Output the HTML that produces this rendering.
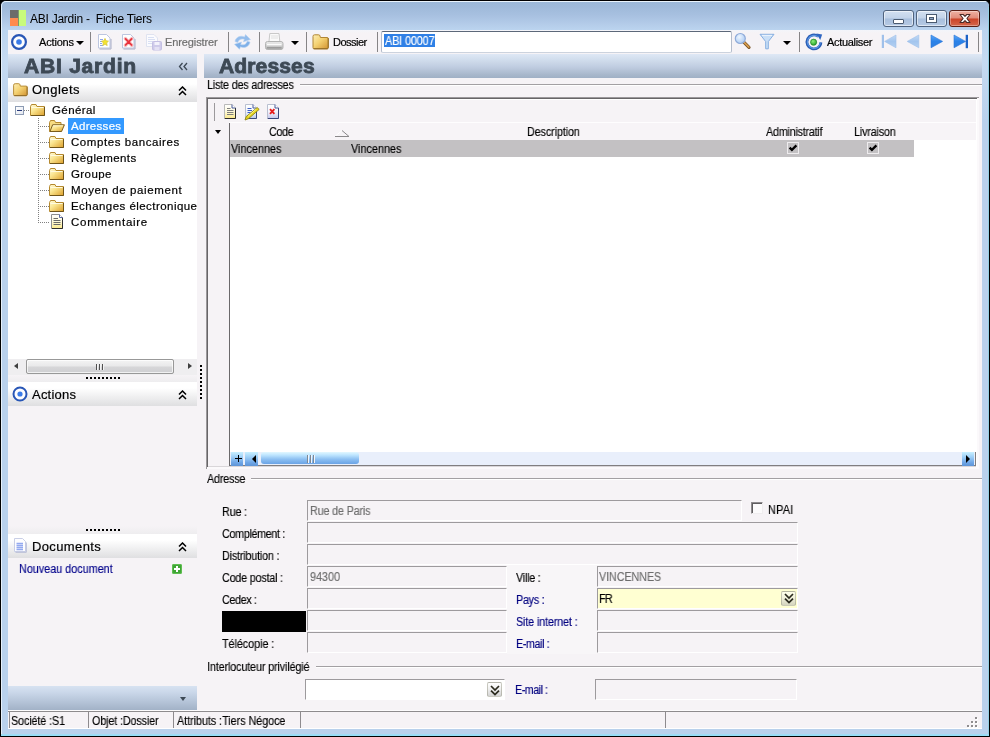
<!DOCTYPE html>
<html>
<head>
<meta charset="utf-8">
<title>ABI Jardin - Fiche Tiers</title>
<style>
html,body{margin:0;padding:0;}
body{width:990px;height:737px;overflow:hidden;background:#000;font-family:"Liberation Sans",sans-serif;font-size:11px;color:#000;position:relative;}
.a{position:absolute;}
.t{will-change:transform;position:absolute;white-space:nowrap;line-height:14px;height:14px;}
#frame{left:0;top:0;width:988px;height:735px;border:1px solid #000;border-radius:6px 6px 0 0;background:#b9d1ec;overflow:hidden;}
#frame .hl{left:0;top:0;width:987px;height:734px;border-left:1px solid #e6f0fa;border-top:1px solid #eaf4fc;border-radius:5px 0 0 0;}
#titlegrad{left:0;top:0;width:988px;height:120px;background:linear-gradient(#9cb8d8 0,#9fbada 6px,#a7c0e0 14px,#b5cdea 24px,#bbd4ef 29px,#c6daf1 60px,#b9d1ec 120px);}
#client{left:8px;top:30px;width:974px;height:699px;background:#f6f3f6;overflow:hidden;}
.field{position:absolute;height:19px;border:1px solid;border-color:#9d9a9d #fff #fff #9d9a9d;background:#f6f3f6;}
.lbl{-webkit-text-stroke:0.15px;will-change:transform;position:absolute;white-space:nowrap;line-height:14px;height:14px;font-size:12px;transform:scaleX(.9);transform-origin:0 0;}
.gbtn{background:linear-gradient(#c9f0ff 0,#9fd0f7 35%,#6fa6e6 75%,#5e93d6 100%);}
.navy{color:#000080;}
.gray{color:#6d6d6d;}

.wb{height:15px;border:1px solid #50637e;border-radius:3px;background:linear-gradient(#d3e0f1 0,#c2d3e9 48%,#a8bfdd 52%,#b6cae4 100%);box-shadow:inset 0 0 0 1px rgba(255,255,255,.55);}
.wc{border-color:#5a1e14;background:linear-gradient(#eeb1a3 0,#e18b79 48%,#cb4328 52%,#d5674c 100%);box-shadow:inset 0 0 0 1px rgba(255,255,255,.35);}
.tri{width:0;height:0;border-style:solid;border-color:#000 transparent transparent transparent;}
.sep{width:1px;height:20px;background:#868486;margin-top:-1px;}
.tb{font-size:11px;-webkit-text-stroke:0.2px;}
.gray2{color:#6e6e6e;}

.hdr{height:24px;top:54px;background:linear-gradient(#dfe8f5 0,#d3dfee 20%,#bfcce0 55%,#a9b8cc 85%,#a0b0c5 100%);}
.big{will-change:transform;position:absolute;white-space:nowrap;font-weight:bold;font-size:19.5px;line-height:24px;height:24px;color:#3d4955;transform-origin:0 0;-webkit-text-stroke:0.8px #3d4955;}
.sech{left:8px;width:189px;height:24px;background:linear-gradient(#ffffff 0,#ffffff 25%,#f0f0f1 60%,#dfdfe1 100%);}
.v13{-webkit-text-stroke:0.2px;font-size:13px;line-height:16px;height:16px;}
.v11{-webkit-text-stroke:0.2px;font-size:11.5px;line-height:14px;height:14px;}
.hd{position:absolute;height:1px;background-image:linear-gradient(90deg,#808080 50%,transparent 50%);background-size:2px 1px;}
.vd{position:absolute;width:1px;background-image:linear-gradient(#808080 50%,transparent 50%);background-size:1px 2px;}
.dots{z-index:2;position:absolute;height:2px;width:34px;background-image:linear-gradient(90deg,#000 50%,transparent 50%);background-size:4px 2px;}

.sb{background:#efeef0;}
.thumb{border:1px solid #989898;border-radius:2px;background:linear-gradient(#f4f4f4 0,#e9e9ea 45%,#d6d6d8 55%,#cfcfd2 100%);box-shadow:inset 0 0 0 1px rgba(255,255,255,.7);}
.grip{position:absolute;width:1px;height:6px;background:#505050;border-right:1px solid #f4f4f4;}

.gl{position:absolute;height:1px;background:#a3a0a3;border-bottom:1px solid #fff;}
.cb{position:absolute;width:10px;height:10px;border:1px solid;border-color:#8e8b8e #efedef #efedef #8e8b8e;background:#fcfbfc;box-shadow:inset 1px 1px 0 #5f5d5f;}
.ddb{position:absolute;width:15px;height:15px;box-sizing:border-box;border:1px solid rgba(140,140,120,.45);border-radius:2px;background:linear-gradient(rgba(255,255,255,.55) 0,rgba(225,225,225,.5) 45%,rgba(170,170,170,.5) 100%);}
</style>
</head>
<body>
<div id="frame" class="a">
  <div id="titlegrad" class="a"></div>
  <div class="a hl"></div>
  <div class="a" style="left:987px;top:6px;width:1px;height:729px;background:#93cfe3;"></div>
  <div class="a" style="left:0;top:733px;width:988px;height:2px;background:linear-gradient(#a5daf3,#8ee0fa);"></div>
</div>
<!-- app icon -->
<div class="a" style="left:10px;top:10px;width:8px;height:8px;background:#6c6c6a;"></div>
<div class="a" style="left:10px;top:18px;width:8px;height:8px;background:#ff8b4f;"></div>
<div class="a" style="left:18px;top:10px;width:8px;height:16px;background:#c8fb7c;"></div>
<div class="a" style="left:18px;top:10px;width:1px;height:16px;background:#7d9a6a;"></div>
<div class="t" id="title" style="left:30px;top:12px;font-size:12px;letter-spacing:-0.25px;">ABI Jardin -&nbsp; Fiche Tiers</div>

<div id="client" class="a">
</div>

<!-- window buttons -->
<div class="a wb" style="left:883px;top:10px;width:29px;"><div class="a" style="left:9px;top:8px;width:9px;height:3px;background:#fff;border:1px solid #4a5a70;border-radius:1px;"></div></div>
<div class="a wb" style="left:916px;top:10px;width:29px;"><div class="a" style="left:10px;top:4px;width:5px;height:3px;border:2px solid #fff;outline:1px solid #4a5a70;background:#8ea4c2;"></div><div class="a" style="left:12px;top:6px;width:5px;height:3px;border:1px solid #4a5a70;box-sizing:border-box;"></div></div>
<div class="a wb wc" style="left:949px;top:10px;width:29px;">
<svg class="a" style="left:9px;top:2px" width="12" height="11" viewBox="0 0 12 11"><path d="M1 1.5 L4.2 1.5 L6 3.3 L7.8 1.5 L11 1.5 L7.9 5.5 L11 9.5 L7.8 9.5 L6 7.7 L4.2 9.5 L1 9.5 L4.1 5.5 Z" fill="#fff" stroke="#4a2a26" stroke-width="1.1" stroke-linejoin="round"/></svg>
</div>

<!-- toolbar -->
<div class="a" id="toolbar" style="left:8px;top:30px;width:974px;height:24px;background:linear-gradient(#f3f5fa 0,#f6f3f6 3px);"></div>
<!-- actions icon -->
<svg class="a" style="left:9.9px;top:32.8px" width="18" height="18" viewBox="0 0 18 18"><circle cx="9" cy="9" r="6.9" fill="#fdfdff" stroke="#2856b6" stroke-width="2.2"/><circle cx="9" cy="9" r="2.8" fill="#3a7be8"/></svg>
<div class="t tb" id="tbActions" style="left:39px;top:35px;letter-spacing:-0.17px;">Actions</div>
<div class="a tri" style="left:76px;top:41px;border-width:4px 4px 0 4px;"></div>
<div class="a sep" style="left:90px;top:33px;"></div>
<div class="t tb gray2" id="tbEnr" style="left:165px;top:35px;letter-spacing:-0.11px;">Enregistrer</div>
<div class="a sep" style="left:228px;top:33px;"></div>
<div class="a sep" style="left:259px;top:33px;"></div>
<div class="a tri" style="left:291px;top:41px;border-width:4px 4px 0 4px;"></div>
<div class="a sep" style="left:306px;top:33px;"></div>
<div class="t tb" id="tbDossier" style="left:333px;top:35px;letter-spacing:-0.51px;">Dossier</div>
<div class="a sep" style="left:377px;top:33px;"></div>
<div class="a" style="left:381px;top:31px;width:349px;height:20px;border:1px solid #b4bccb;border-top-color:#5c6879;border-bottom-color:#ccd3de;background:#fff;border-radius:2px;"></div>
<div class="a" style="left:384px;top:34px;width:51px;height:13px;background:#2f80e6;"></div>
<div class="lbl" id="tbAbi" style="left:385px;top:34px;color:#fff;letter-spacing:-0.12px;">ABI 00007</div>
<div class="a tri" style="left:783px;top:41px;border-width:4px 4px 0 4px;"></div>
<div class="a sep" style="left:799px;top:33px;"></div>
<div class="t tb" id="tbActu" style="left:827px;top:35px;letter-spacing:-0.32px;">Actualiser</div>
<div class="a sep" style="left:978px;top:33px;"></div>

<!-- header band -->
<div class="a hdr" style="left:8px;width:189px;"></div>
<div class="a hdr" style="left:204px;width:778px;"></div>
<div class="big" id="hAbi" style="left:24px;top:54px;transform:scaleX(1.08);letter-spacing:0.7px;">ABI Jardin</div>
<div class="big" id="hAdr" style="left:219px;top:54px;transform:scaleX(1.08);letter-spacing:0.1px;">Adresses</div>
<svg class="a" style="left:178px;top:62px" width="10" height="9" viewBox="0 0 10 9"><path d="M4.5 1 L1.5 4.5 L4.5 8 M9 1 L6 4.5 L9 8" fill="none" stroke="#3d4955" stroke-width="1.3"/></svg>

<!-- left panel -->
<div class="a" style="left:8px;top:78px;width:189px;height:281px;background:#fff;"></div>
<div class="a sech" style="top:78px;"></div>
<svg class="a chev" style="left:178px;top:86px" width="9" height="10" viewBox="0 0 9 10"><path d="M1 4.5 L4.5 1 L8 4.5 M1 9 L4.5 5.5 L8 9" fill="none" stroke="#000" stroke-width="1.5"/></svg>
<div class="t v13" id="lOnglets" style="left:32px;top:82px;letter-spacing:0.47px;">Onglets</div>

<!-- tree -->
<div class="a" style="left:15px;top:106px;width:7px;height:7px;border:1px solid #8c9bb3;background:linear-gradient(135deg,#fff,#e4e8f0);"></div>
<div class="a" style="left:17px;top:110px;width:5px;height:1px;background:#26397a;"></div>
<div class="hd" style="left:24px;top:110px;width:6px;"></div>
<div class="vd" style="left:38px;top:118px;height:105px;"></div>
<div class="hd" style="left:40px;top:126px;width:9px;"></div>
<div class="hd" style="left:40px;top:142px;width:9px;"></div>
<div class="hd" style="left:40px;top:158px;width:9px;"></div>
<div class="hd" style="left:40px;top:174px;width:9px;"></div>
<div class="hd" style="left:40px;top:190px;width:9px;"></div>
<div class="hd" style="left:40px;top:206px;width:9px;"></div>
<div class="hd" style="left:40px;top:222px;width:9px;"></div>
<div class="a" style="left:68px;top:118px;width:56px;height:16px;background:#3399ff;"></div>
<div class="a" id="treeclip" style="left:8px;top:101px;width:189px;height:140px;overflow:hidden;">
<div class="t v11" id="t0" style="left:44px;top:2px;letter-spacing:0.41px;">Général</div>
<div class="t v11" id="t1" style="left:63px;top:18px;color:#fff;letter-spacing:0.31px;">Adresses</div>
<div class="t v11" id="t2" style="left:63px;top:34px;letter-spacing:0.57px;">Comptes bancaires</div>
<div class="t v11" id="t3" style="left:63px;top:50px;letter-spacing:0.43px;">Règlements</div>
<div class="t v11" id="t4" style="left:63px;top:66px;letter-spacing:0.41px;">Groupe</div>
<div class="t v11" id="t5" style="left:63px;top:82px;letter-spacing:0.60px;">Moyen de paiement</div>
<div class="t v11" id="t6" style="left:63px;top:98px;letter-spacing:0.45px;">Echanges électronique</div>
<div class="t v11" id="t7" style="left:63px;top:114px;letter-spacing:0.72px;">Commentaire</div>
</div>

<!-- tree hscroll -->
<div class="a sb" style="left:8px;top:359px;width:189px;height:16px;"></div>
<div class="a" style="left:14px;top:363px;width:0;height:0;border-style:solid;border-width:3.5px 4px 3.5px 0;border-color:transparent #3f3f3f transparent transparent;"></div>
<div class="a" style="left:188px;top:363px;width:0;height:0;border-style:solid;border-width:3.5px 0 3.5px 4px;border-color:transparent transparent transparent #3f3f3f;"></div>
<div class="a thumb" style="left:26px;top:359px;width:146px;height:13px;"></div>
<div class="grip" style="left:96px;top:364px;"></div><div class="grip" style="left:99px;top:364px;"></div><div class="grip" style="left:102px;top:364px;"></div>
<div class="dots" style="left:86px;top:377px;"></div>
<div class="a" style="left:200px;top:365px;width:2px;height:34px;background-image:linear-gradient(#000 50%,transparent 50%);background-size:2px 4px;"></div>
<!-- Actions section -->
<div class="a" style="left:8px;top:375px;width:189px;height:7px;background:linear-gradient(#f6f3f6,#eeedef);"></div>
<div class="a sech" style="top:382px;"></div>
<svg class="a" style="left:11px;top:385px" width="18" height="18" viewBox="0 0 18 18"><circle cx="9" cy="9" r="6.5" fill="#fdfdff" stroke="#2856b6" stroke-width="2"/><circle cx="9" cy="9" r="2.6" fill="#3a7be8"/></svg>
<div class="t v13" id="lActions" style="left:32px;top:387px;letter-spacing:0.22px;">Actions</div>
<svg class="a chev" style="left:178px;top:390px" width="9" height="10" viewBox="0 0 9 10"><path d="M1 4.5 L4.5 1 L8 4.5 M1 9 L4.5 5.5 L8 9" fill="none" stroke="#000" stroke-width="1.5"/></svg>
<div class="dots" style="left:86px;top:529px;"></div>
<!-- Documents section -->
<div class="a" style="left:8px;top:526px;width:189px;height:8px;background:linear-gradient(#f6f3f6,#eeedef);"></div>
<div class="a sech" style="top:534px;"></div>
<div class="t v13" id="lDocs" style="left:32px;top:539px;letter-spacing:0.37px;">Documents</div>
<svg class="a chev" style="left:178px;top:542px" width="9" height="10" viewBox="0 0 9 10"><path d="M1 4.5 L4.5 1 L8 4.5 M1 9 L4.5 5.5 L8 9" fill="none" stroke="#000" stroke-width="1.5"/></svg>
<div class="lbl" id="lNouv" style="left:18.5px;top:562px;color:#00008b;letter-spacing:0.00px;">Nouveau document</div>
<div class="a" style="left:172px;top:564px;width:10px;height:10px;background:#3fa535;border-radius:2px;box-shadow:inset 0 0 0 1px #5fbf50;"></div>
<div class="a" style="left:176px;top:566px;width:2px;height:6px;background:#fff;"></div>
<div class="a" style="left:174px;top:568px;width:6px;height:2px;background:#fff;"></div>
<!-- bottom band -->
<div class="a" style="left:8px;top:686px;width:189px;height:24px;background:linear-gradient(#d7e2f1 0,#cbd8ea 25%,#b5c4d8 65%,#a2b2c7 100%);"></div>
<div class="a" style="left:180px;top:697px;width:0;height:0;border-style:solid;border-width:4px 3.5px 0 3.5px;border-color:#3d4955 transparent transparent transparent;"></div>
<!-- status bar -->
<div class="a" style="left:8px;top:710px;width:974px;height:1px;background:#fdfcfd;"></div>
<div class="a" style="left:8px;top:711px;width:974px;height:18px;background:#f6f3f6;border-top:1px solid #8e8c8e;border-bottom:1px solid #fff;box-sizing:border-box;"></div>
<div class="a" style="left:9px;top:712px;width:1px;height:16px;background:#8e8b8e;"></div>
<div class="a" style="left:88px;top:712px;width:1px;height:16px;background:#8e8b8e;"></div>
<div class="a" style="left:173px;top:712px;width:1px;height:16px;background:#8e8b8e;"></div>
<div class="a" style="left:300px;top:712px;width:1px;height:16px;background:#8e8b8e;"></div>
<div class="a" style="left:665px;top:712px;width:1px;height:16px;background:#8e8b8e;"></div>
<div class="lbl" id="s1" style="left:10.5px;top:714px;letter-spacing:-0.13px;">Société :S1</div>
<div class="lbl" id="s2" style="left:92px;top:714px;letter-spacing:-0.16px;">Objet :Dossier</div>
<div class="lbl" id="s3" style="left:177px;top:714px;letter-spacing:-0.05px;">Attributs :Tiers Négoce</div>

<!-- group: Liste des adresses -->
<div class="gl" style="left:300px;top:84px;width:682px;"></div>
<div class="lbl" id="gListe" style="left:207px;top:78px;letter-spacing:-0.21px;">Liste des adresses</div>
<!-- grid -->
<div class="a" style="left:206px;top:97px;width:773px;height:372px;background:#fbf9fb;"></div>
<div class="a" style="left:206px;top:97px;width:772px;height:371px;border-left:1px solid #9b989b;border-top:1px solid #9b989b;"></div>
<div class="a" style="left:207px;top:98px;width:769px;height:368px;border-left:1px solid #676567;border-top:1px solid #676567;background:#fff;"></div>
<div class="a" style="left:208px;top:466px;width:768px;height:1px;background:#d9d6d9;"></div>
<div class="a" style="left:208px;top:99px;width:768px;height:24px;background:#f6f3f6;border-top:1px solid #fff;box-sizing:border-box;"></div>
<div class="a" style="left:208px;top:122px;width:768px;height:18px;background:#f7f4f7;border-top:1px solid #fefdfe;box-sizing:border-box;"></div>
<div class="a" style="left:208px;top:99px;width:21px;height:367px;background:#f6f3f6;"></div>
<div class="a" style="left:229px;top:123px;width:1px;height:343px;background:#6b696b;"></div>
<div class="a" style="left:214px;top:103px;width:1px;height:18px;background:#9c999c;"></div>
<div class="a" style="left:215px;top:130px;width:0;height:0;border-style:solid;border-width:4px 3.5px 0 3.5px;border-color:#000 transparent transparent transparent;"></div>
<div class="a" style="left:230px;top:140px;width:684px;height:17px;background:#c3c1c3;"></div>
<div class="lbl" id="gCode" style="left:269px;top:125px;letter-spacing:-0.42px;">Code</div>
<div class="lbl" id="gDesc" style="left:526.5px;top:125px;letter-spacing:-0.14px;">Description</div>
<div class="lbl" id="gAdm" style="left:766px;top:125px;letter-spacing:-0.27px;">Administratif</div>
<div class="lbl" id="gLiv" style="left:853.5px;top:125px;letter-spacing:-0.20px;">Livraison</div>
<div class="lbl" id="gV1" style="left:231px;top:142px;letter-spacing:0.03px;">Vincennes</div>
<div class="lbl" id="gV2" style="left:351px;top:142px;letter-spacing:0.03px;">Vincennes</div>
<svg class="a" style="left:334px;top:129px" width="16" height="9" viewBox="0 0 16 9"><path d="M1 7.5 L8 1.5" stroke="#fff" stroke-width="1" fill="none"/><path d="M1 7.5 L15 7.5 L8 1.5" stroke="#8a888a" stroke-width="1" fill="none"/></svg>
<!-- grid bottom scroll -->
<div class="a" style="left:230px;top:452px;width:745px;height:13px;background:#e9effb;"></div>
<div class="a" style="left:230px;top:465px;width:746px;height:1px;background:#807e80;"></div>
<div class="a" style="left:975px;top:452px;width:1px;height:14px;background:#807e80;"></div>
<div class="a gbtn" style="left:231px;top:452px;width:12px;height:14px;"></div>
<div class="a" style="left:235px;top:458px;width:7px;height:1px;background:#000;"></div><div class="a" style="left:238px;top:455px;width:1px;height:7px;background:#000;"></div>
<div class="a gbtn" style="left:245px;top:452px;width:13px;height:14px;"></div>
<div class="a" style="left:252px;top:455px;width:0;height:0;border-style:solid;border-width:4px 4px 4px 0;border-color:transparent #000 transparent transparent;"></div>
<div class="a gbtn" style="left:962px;top:452px;width:12px;height:14px;"></div>
<div class="a" style="left:966px;top:455px;width:0;height:0;border-style:solid;border-width:4px 0 4px 4px;border-color:transparent transparent transparent #000;"></div>
<div class="a" style="left:261px;top:452px;width:98px;height:12px;border-radius:3px;background:linear-gradient(#e2f7ff 0,#bfe6ff 25%,#8dc0f2 60%,#6aa3e6 100%);"></div>
<div class="a" style="left:307px;top:455px;width:1px;height:8px;background:#7d8894;border-right:1px solid #f0f6ff;"></div>
<div class="a" style="left:310px;top:455px;width:1px;height:8px;background:#7d8894;border-right:1px solid #f0f6ff;"></div>
<div class="a" style="left:313px;top:455px;width:1px;height:8px;background:#7d8894;border-right:1px solid #f0f6ff;"></div>
<!-- group: Adresse -->
<div class="gl" style="left:251px;top:478px;width:731px;"></div>
<div class="lbl" id="gAdresse" style="left:207px;top:472px;letter-spacing:-0.23px;">Adresse</div>
<!-- fields -->
<div class="a" style="left:507px;top:565px;width:90px;height:89px;background:#f8f6f8;"></div>
<div class="lbl" id="fRue" style="left:222px;top:505px;letter-spacing:-0.20px;">Rue :</div>
<div class="lbl" id="fCompl" style="left:222px;top:527px;letter-spacing:-0.40px;">Complément :</div>
<div class="lbl" id="fDist" style="left:222px;top:549px;letter-spacing:-0.22px;">Distribution :</div>
<div class="lbl" id="fCp" style="left:222px;top:571px;letter-spacing:-0.24px;">Code postal :</div>
<div class="lbl" id="fCedex" style="left:222px;top:593px;letter-spacing:-0.40px;">Cedex :</div>
<div class="a" style="left:222px;top:611px;width:84px;height:21px;background:#000;"></div>
<div class="lbl" id="fTelec" style="left:222px;top:637px;letter-spacing:-0.06px;">Télécopie :</div>
<div class="field" style="left:307px;top:500px;width:433px;"></div>
<div class="field" style="left:307px;top:522px;width:489px;"></div>
<div class="field" style="left:307px;top:544px;width:489px;"></div>
<div class="field" style="left:307px;top:566px;width:198px;"></div>
<div class="field" style="left:307px;top:588px;width:198px;"></div>
<div class="field" style="left:307px;top:610px;width:198px;"></div>
<div class="field" style="left:307px;top:632px;width:198px;"></div>
<div class="lbl gray" id="vRue" style="left:310px;top:504px;letter-spacing:-0.20px;">Rue de Paris</div>
<div class="lbl gray" id="vCp" style="left:310px;top:570px;letter-spacing:-0.01px;">94300</div>
<div class="cb" style="left:751px;top:502px;"></div>
<div class="lbl" id="fNpai" style="left:768px;top:503px;letter-spacing:0.35px;">NPAI</div>
<div class="lbl" id="fVille" style="left:516px;top:571px;letter-spacing:-0.28px;">Ville :</div>
<div class="lbl navy" id="fPays" style="left:516px;top:593px;letter-spacing:-0.31px;">Pays :</div>
<div class="lbl navy" id="fSite" style="left:516px;top:615px;letter-spacing:-0.16px;">Site internet :</div>
<div class="lbl navy" id="fEmail" style="left:516px;top:637px;letter-spacing:-0.49px;">E-mail :</div>
<div class="field" style="left:597px;top:566px;width:199px;"></div>
<div class="field" style="left:597px;top:588px;width:199px;background:#ffffd2;"></div>
<div class="field" style="left:597px;top:610px;width:199px;"></div>
<div class="field" style="left:597px;top:632px;width:199px;"></div>
<div class="lbl gray" id="vVille" style="left:599px;top:570px;letter-spacing:-0.12px;">VINCENNES</div>
<div class="lbl" id="vPays" style="left:599px;top:592px;letter-spacing:-0.74px;">FR</div>
<div class="ddb" style="left:781px;top:590.5px;"><svg class="a" style="left:1.5px;top:1.5px" width="10" height="11" viewBox="0 0 10 11"><path d="M1 1 L5 5 L9 1 M1 5.6 L5 9.6 L9 5.6" fill="none" stroke="#2b2a1e" stroke-width="1.7"/></svg></div>
<!-- group: Interlocuteur -->
<div class="gl" style="left:316px;top:666px;width:666px;"></div>
<div class="lbl" id="gInter" style="left:207px;top:660px;letter-spacing:-0.15px;">Interlocuteur privilégié</div>
<div class="field" style="left:305px;top:679px;width:198px;background:#fff;"></div>
<div class="ddb" style="left:487px;top:682px;"><svg class="a" style="left:1.5px;top:1.5px" width="10" height="11" viewBox="0 0 10 11"><path d="M1 1 L5 5 L9 1 M1 5.6 L5 9.6 L9 5.6" fill="none" stroke="#2b2a1e" stroke-width="1.7"/></svg></div>
<div class="lbl navy" id="fEmail2" style="left:515px;top:683px;letter-spacing:-0.58px;">E-mail :</div>
<div class="field" style="left:595px;top:679px;width:200px;"></div>
<!-- ===== ICONS ===== -->
<svg width="0" height="0" style="position:absolute"><defs>
<linearGradient id="gFold" x1="0" y1="0" x2="1" y2="1"><stop offset="0" stop-color="#fdeeb4"/><stop offset=".45" stop-color="#f4d273"/><stop offset="1" stop-color="#d2922f"/></linearGradient>
<linearGradient id="gFold2" x1="0" y1="0" x2="1" y2="1"><stop offset="0" stop-color="#fffbe0"/><stop offset=".4" stop-color="#fae58f"/><stop offset="1" stop-color="#dc9f2c"/></linearGradient>
<linearGradient id="gYel" x1="0" y1="0" x2="0" y2="1"><stop offset="0" stop-color="#ffffff"/><stop offset=".45" stop-color="#fffbe0"/><stop offset="1" stop-color="#fbe98a"/></linearGradient>
<linearGradient id="gBlu" x1="0" y1="0" x2="0" y2="1"><stop offset="0" stop-color="#ffffff"/><stop offset=".5" stop-color="#f2f5fc"/><stop offset="1" stop-color="#b9c9e8"/></linearGradient>
<linearGradient id="gLav" x1="0" y1="0" x2="0" y2="1"><stop offset="0" stop-color="#ffffff"/><stop offset=".5" stop-color="#f4f4fc"/><stop offset="1" stop-color="#c4c6ea"/></linearGradient>
<linearGradient id="gNavL" x1="0" y1="0" x2="0" y2="1"><stop offset="0" stop-color="#c3dbf6"/><stop offset=".5" stop-color="#a3c5ee"/><stop offset="1" stop-color="#b5d1f2"/></linearGradient>
<linearGradient id="gNavD" x1="0" y1="0" x2="0" y2="1"><stop offset="0" stop-color="#5aa7f6"/><stop offset=".5" stop-color="#2b82e8"/><stop offset="1" stop-color="#2f7fe0"/></linearGradient>
<linearGradient id="gPrn" x1="0" y1="0" x2="0" y2="1"><stop offset="0" stop-color="#ececec"/><stop offset=".5" stop-color="#d2d2d2"/><stop offset="1" stop-color="#a9a9a9"/></linearGradient>
<radialGradient id="gLens" cx=".4" cy=".35" r=".7"><stop offset="0" stop-color="#eef6ff"/><stop offset="1" stop-color="#a9c9f2"/></radialGradient>
<radialGradient id="gGreen" cx=".4" cy=".35" r=".7"><stop offset="0" stop-color="#8af07a"/><stop offset="1" stop-color="#1f9a22"/></radialGradient>

</defs></svg>
<!-- toolbar: new (star) -->
<svg class="a" style="left:97px;top:33px" width="16" height="18" viewBox="0 0 16 18"><path d="M1.5 1.5 L9.5 1.5 L13 5 L13 15 L1.5 15 Z" fill="#fff" stroke="#bcc6df" stroke-width="1"/><path d="M2.5 16 L14 16 L14 6" fill="none" stroke="#a9aec6" stroke-width="1"/><path d="M3 6.5 H6 M3 8.5 H5 M3 10.5 H5 M3 12.5 H6" stroke="#8fa6e6" stroke-width="1"/><path d="M8 5.4 L9.1 7.8 L11.5 8.1 L9.7 9.9 L10.2 12.6 L8 11.3 L5.8 12.6 L6.3 9.9 L4.5 8.1 L6.9 7.8 Z" fill="#f4e32e" stroke="#d4c43a" stroke-width=".7"/></svg>
<!-- toolbar: delete -->
<svg class="a" style="left:121px;top:33px" width="16" height="18" viewBox="0 0 16 18"><path d="M1.5 1.5 L9.5 1.5 L13 5 L13 15 L1.5 15 Z" fill="#fff" stroke="#bcc6df" stroke-width="1"/><path d="M2.5 16 L14 16 L14 6" fill="none" stroke="#a9aec6" stroke-width="1"/><path d="M4.4 5.6 L10.8 12.2 M10.8 5.6 L4.4 12.2" stroke="#f6b9bc" stroke-width="3.4" stroke-linecap="round"/><path d="M4.6 5.8 L10.6 12 M10.6 5.8 L4.6 12" stroke="#e8323c" stroke-width="1.7" stroke-linecap="round"/></svg>
<!-- toolbar: save (disabled) -->
<svg class="a" style="left:145px;top:33px" width="18" height="18" viewBox="0 0 18 18"><path d="M1.5 1.5 L9 1.5 L12.5 5 L12.5 13.5 L1.5 13.5 Z" fill="#fbfbfe" stroke="#dfe3f0" stroke-width="1"/><path d="M3 4.5 H9 M3 6.5 H10 M3 8.5 H8 M3 10.5 H7" stroke="#d9e0f3" stroke-width="1"/><rect x="7.5" y="8.5" width="9" height="8.5" rx="1" fill="#cfcbea" stroke="#c4bfe3" stroke-width="1"/><rect x="9.5" y="9" width="5" height="3" fill="#f3f2fb"/><rect x="9.5" y="14" width="5" height="3" fill="#e4e1f4"/></svg>
<!-- toolbar: refresh (disabled) -->
<svg class="a" style="left:233px;top:33px" width="19" height="18" viewBox="0 0 19 18"><path d="M2 8.5 C2.5 4 8 2 11.5 4 L12.5 1.5 L17.5 6.5 L10.5 8.8 L11.3 6.3 C8.5 5.3 5.5 6.5 4.8 9.6 Z" fill="#94bdec" stroke="#b9d4f3" stroke-width=".6"/><path d="M17 9 C16.5 13.5 11 15.8 7.5 13.8 L6.5 16.3 L1.5 11.3 L8.5 9 L7.7 11.5 C10.5 12.5 13.5 11.3 14.2 8.2 Z" fill="#7fb0e8" stroke="#b9d4f3" stroke-width=".6"/></svg>
<!-- toolbar: printer -->
<svg class="a" style="left:264px;top:32px" width="20" height="19" viewBox="0 0 20 19"><path d="M5 9.5 L5.8 1.5 L15 1.5 L15.8 9.5 Z" fill="#fafafa" stroke="#c9c9c9" stroke-width="1"/><path d="M7 4 H14 M7 6 H14" stroke="#e0e0e0" stroke-width="1"/><path d="M1.5 11.5 Q1.5 9.5 3.5 9.5 L17 9.5 Q19 9.5 19 11.5 L19 15.5 Q19 17.5 17 17.5 L3.5 17.5 Q1.5 17.5 1.5 15.5 Z" fill="url(#gPrn)" stroke="#b4b4b4" stroke-width="1"/><path d="M3 12.5 H17.5" stroke="#fbfbfb" stroke-width="1.4"/><path d="M3 15.8 H17.5" stroke="#8f8f8f" stroke-width="1"/></svg>
<!-- toolbar: folder -->
<svg class="a" style="left:312px;top:34px" width="17" height="16" viewBox="0 0 17 16"><path d="M1 2.4 Q1 0.8 2.6 0.8 L6.6 0.8 Q7.8 0.8 8 2 L8.4 3.5 L15 3.5 Q16.3 3.5 16.3 4.8 L16.3 13.6 Q16.3 15 15 15 L2.3 15 Q1 15 1 13.6 Z" fill="url(#gFold)" stroke="#b08636" stroke-width="1"/><path d="M1.6 14.6 L15.5 14.6 Q16.2 14.3 16.2 13.3 L16.2 4" fill="none" stroke="#96702a" stroke-width="1"/></svg>
<!-- toolbar: search -->
<svg class="a" style="left:733px;top:32px" width="19" height="19" viewBox="0 0 19 19"><path d="M10.8 10.2 L16 15.4" stroke="#7a5424" stroke-width="3.2" stroke-linecap="round"/><path d="M10.8 10 L15.8 15" stroke="#dda050" stroke-width="1.7" stroke-linecap="round"/><circle cx="7.3" cy="6.5" r="5" fill="url(#gLens)" stroke="#8fabd9" stroke-width="1.2"/></svg>
<!-- toolbar: funnel -->
<svg class="a" style="left:759px;top:33px" width="16" height="17" viewBox="0 0 16 17"><path d="M1 1.3 L15 1.3 L9.3 8.6 L9.3 15.8 L6.7 15.8 L6.7 8.6 Z" fill="#c9dff7" stroke="#86aee0" stroke-width="1" stroke-linejoin="round"/><path d="M3 2.4 L13 2.4" stroke="#edf4fd" stroke-width="1"/></svg>
<!-- toolbar: actualiser -->
<svg class="a" style="left:804px;top:32px" width="20" height="20" viewBox="0 0 20 20"><path d="M14.2 4.4 A7 7 0 1 0 16.9 10.4" fill="none" stroke="#2a5db5" stroke-width="2.8"/><path d="M13.9 4.8 A6.5 6.5 0 1 0 16.4 10.4" fill="none" stroke="#5a97e4" stroke-width="1.1"/><path d="M12.4 1.6 L18.2 2.6 L16.2 8 Z" fill="#2f66c2"/><circle cx="9.6" cy="10.2" r="3.1" fill="url(#gGreen)" stroke="#1b7d20" stroke-width=".6"/></svg>
<!-- toolbar: nav -->
<svg class="a" style="left:881px;top:34px" width="16" height="15" viewBox="0 0 16 15"><rect x="0.8" y="0.8" width="2.2" height="13.2" fill="#9fc0ea"/><path d="M3.6 7.4 L15 1 L15 13.8 Z" fill="url(#gNavL)" stroke="#9dbfea" stroke-width=".6"/></svg>
<svg class="a" style="left:906px;top:34px" width="14" height="15" viewBox="0 0 14 15"><path d="M1.2 7.4 L12.8 1 L12.8 13.8 Z" fill="url(#gNavL)" stroke="#9dbfea" stroke-width=".6"/></svg>
<svg class="a" style="left:930px;top:34px" width="14" height="15" viewBox="0 0 14 15"><path d="M12.6 7.4 L1 1 L1 13.8 Z" fill="url(#gNavD)" stroke="#2a75d8" stroke-width=".6"/></svg>
<svg class="a" style="left:953px;top:34px" width="16" height="15" viewBox="0 0 16 15"><path d="M12.6 7.4 L1 1 L1 13.8 Z" fill="url(#gNavD)" stroke="#2a75d8" stroke-width=".6"/><rect x="12.7" y="0.8" width="2.3" height="13.4" fill="#1c62c6"/></svg>
<!-- Onglets folder -->
<svg class="a" style="left:13px;top:83px" width="15" height="14" viewBox="0 0 15 14"><path d="M0.6 2.2 Q0.6 0.7 2.2 0.7 L5.8 0.7 Q6.8 0.7 7 1.8 L7.3 3.1 L13 3.1 Q14.2 3.1 14.2 4.2 L14.2 11.6 Q14.2 12.8 13 12.8 L1.8 12.8 Q0.6 12.8 0.6 11.6 Z" fill="url(#gFold)" stroke="#b98f3c" stroke-width="1"/><path d="M1.2 12.5 L13.5 12.5 Q14.1 12.2 14.1 11.3 L14.1 3.6" fill="none" stroke="#96702a" stroke-width="1"/></svg>
<!-- tree folders -->
<svg class="a" style="left:30px;top:104px" width="15" height="12" viewBox="0 0 15 12"><path d="M0.5 2.5 L0.5 11.5 L14.5 11.5 L14.5 2.5 L7 2.5 L6 0.5 L1.5 0.5 Z" fill="url(#gFold2)" stroke="#b5892f" stroke-width="1"/><path d="M1 11.5 L14.5 11.5 L14.5 3" fill="none" stroke="#6f5418" stroke-width="1"/><path d="M1.5 3.5 L13.5 3.5" stroke="#fffbe0" stroke-width="1"/></svg>
<svg class="a" style="left:49px;top:120px" width="16" height="12" viewBox="0 0 16 12"><path d="M0.5 2.5 L0.5 11.5 L12 11.5 L12 2.5 L6.5 2.5 L5.5 0.5 L1.5 0.5 Z" fill="#f7dc82" stroke="#b5892f" stroke-width="1"/><path d="M1 11.5 L3.6 4.8 L15.4 4.8 L12.6 11.5 Z" fill="url(#gFold2)" stroke="#7a5c1c" stroke-width="1" stroke-linejoin="round"/><path d="M4.2 5.8 L14 5.8" stroke="#fff7cf" stroke-width="1"/></svg>
<svg class="a" style="left:49px;top:136px" width="15" height="12" viewBox="0 0 15 12"><path d="M0.5 2.5 L0.5 11.5 L14.5 11.5 L14.5 2.5 L7 2.5 L6 0.5 L1.5 0.5 Z" fill="url(#gFold2)" stroke="#b5892f" stroke-width="1"/><path d="M1 11.5 L14.5 11.5 L14.5 3" fill="none" stroke="#6f5418" stroke-width="1"/><path d="M1.5 3.5 L13.5 3.5" stroke="#fffbe0" stroke-width="1"/></svg>
<svg class="a" style="left:49px;top:152px" width="15" height="12" viewBox="0 0 15 12"><path d="M0.5 2.5 L0.5 11.5 L14.5 11.5 L14.5 2.5 L7 2.5 L6 0.5 L1.5 0.5 Z" fill="url(#gFold2)" stroke="#b5892f" stroke-width="1"/><path d="M1 11.5 L14.5 11.5 L14.5 3" fill="none" stroke="#6f5418" stroke-width="1"/><path d="M1.5 3.5 L13.5 3.5" stroke="#fffbe0" stroke-width="1"/></svg>
<svg class="a" style="left:49px;top:168px" width="15" height="12" viewBox="0 0 15 12"><path d="M0.5 2.5 L0.5 11.5 L14.5 11.5 L14.5 2.5 L7 2.5 L6 0.5 L1.5 0.5 Z" fill="url(#gFold2)" stroke="#b5892f" stroke-width="1"/><path d="M1 11.5 L14.5 11.5 L14.5 3" fill="none" stroke="#6f5418" stroke-width="1"/><path d="M1.5 3.5 L13.5 3.5" stroke="#fffbe0" stroke-width="1"/></svg>
<svg class="a" style="left:49px;top:184px" width="15" height="12" viewBox="0 0 15 12"><path d="M0.5 2.5 L0.5 11.5 L14.5 11.5 L14.5 2.5 L7 2.5 L6 0.5 L1.5 0.5 Z" fill="url(#gFold2)" stroke="#b5892f" stroke-width="1"/><path d="M1 11.5 L14.5 11.5 L14.5 3" fill="none" stroke="#6f5418" stroke-width="1"/><path d="M1.5 3.5 L13.5 3.5" stroke="#fffbe0" stroke-width="1"/></svg>
<svg class="a" style="left:49px;top:200px" width="15" height="12" viewBox="0 0 15 12"><path d="M0.5 2.5 L0.5 11.5 L14.5 11.5 L14.5 2.5 L7 2.5 L6 0.5 L1.5 0.5 Z" fill="url(#gFold2)" stroke="#b5892f" stroke-width="1"/><path d="M1 11.5 L14.5 11.5 L14.5 3" fill="none" stroke="#6f5418" stroke-width="1"/><path d="M1.5 3.5 L13.5 3.5" stroke="#fffbe0" stroke-width="1"/></svg>
<!-- tree doc (Commentaire) -->
<svg class="a" style="left:51px;top:214px" width="13" height="15" viewBox="0 0 13 15"><path d="M0.5 0.5 L8.5 0.5 L11.5 3.5 L11.5 14.5 L0.5 14.5 Z" fill="url(#gYel)" stroke="#8e8e8e" stroke-width="1"/><path d="M1 14.5 L11.5 14.5 L11.5 3.5" fill="none" stroke="#2e2e2e" stroke-width="1"/><path d="M8.5 0.5 L8.5 3.5 L11.5 3.5" fill="#fff" stroke="#5b6aa8" stroke-width="1"/><path d="M2.5 4.5 H7 M2.5 6.5 H9.5 M2.5 8.5 H9.5 M2.5 10.5 H9.5" stroke="#6a6a6a" stroke-width="1"/></svg>
<!-- Documents icon -->
<svg class="a" style="left:14px;top:538px" width="13" height="15" viewBox="0 0 13 15"><path d="M0.5 0.5 L8.5 0.5 L11.5 3.5 L11.5 13.5 L0.5 13.5 Z" fill="#fdfdff" stroke="#c9cfe6" stroke-width="1"/><path d="M1.5 14.3 L12.3 14.3 L12.3 4.5" fill="none" stroke="#b7bcd6" stroke-width="1"/><path d="M2.5 5.5 H9 M2.5 7.5 H9 M2.5 9.5 H9 M2.5 11.5 H9" stroke="#93a9f0" stroke-width="1.3"/></svg>
<!-- grid toolbar: new -->
<svg class="a" style="left:224px;top:104px" width="13" height="16" viewBox="0 0 13 16"><path d="M0.5 0.5 L8 0.5 L11.5 4 L11.5 14.5 L0.5 14.5 Z" fill="url(#gYel)" stroke="#b9b9b9" stroke-width="1"/><path d="M0.8 14.5 L11.5 14.5 L11.5 4" fill="none" stroke="#2b2b2b" stroke-width="1"/><path d="M8 0.5 L8 4 L11.5 4" fill="#fff" stroke="#4b5a9a" stroke-width="1"/><path d="M3 4.5 H6.5 M3 6.5 H9.5 M3 8.5 H9.5 M3 10.5 H9.5" stroke="#7f7f7f" stroke-width="1"/></svg>
<!-- grid toolbar: edit -->
<svg class="a" style="left:244px;top:104px" width="16" height="17" viewBox="0 0 16 17"><path d="M1.5 0.5 L9 0.5 L12.5 4 L12.5 14.5 L1.5 14.5 Z" fill="url(#gBlu)" stroke="#b9bfd0" stroke-width="1"/><path d="M1.8 14.5 L12.5 14.5 L12.5 4" fill="none" stroke="#3a4a78" stroke-width="1"/><path d="M9 0.5 L9 4 L12.5 4" fill="#fff" stroke="#4b5a9a" stroke-width="1"/><path d="M3.5 4.5 H7.5 M3.5 6.5 H8 M3.5 8.5 H6.5" stroke="#3c5fc8" stroke-width="1"/><path d="M13.2 3.6 L15.2 5.4 L4.6 14.6 L1 16 L2.2 12.6 Z" fill="#e6d61e" stroke="#8f8416" stroke-width=".9" stroke-linejoin="round"/><path d="M12.4 5 L4 12.4" stroke="#fbf285" stroke-width="1"/></svg>
<!-- grid toolbar: delete -->
<svg class="a" style="left:267px;top:104px" width="13" height="16" viewBox="0 0 13 16"><path d="M0.5 0.5 L8 0.5 L11.5 4 L11.5 14.5 L0.5 14.5 Z" fill="url(#gLav)" stroke="#b9bfd0" stroke-width="1"/><path d="M0.8 14.5 L11.5 14.5 L11.5 4" fill="none" stroke="#39467a" stroke-width="1"/><path d="M8 0.5 L8 4 L11.5 4" fill="#fff" stroke="#4b5a9a" stroke-width="1"/><path d="M3 5.2 L7.4 9.8 M7.4 5.2 L3 9.8" stroke="#e61c1c" stroke-width="1.9"/></svg>
<!-- grid checkboxes -->
<div class="a" style="left:787px;top:142px;width:10px;height:10px;border:1px solid #eeecee;"></div>
<svg class="a" style="left:788px;top:143px" width="10" height="10" viewBox="0 0 10 10"><path d="M1.6 4.6 L3.9 6.8 L8.4 2.4" fill="none" stroke="#000" stroke-width="2.3"/></svg>
<div class="a" style="left:867px;top:142px;width:10px;height:10px;border:1px solid #eeecee;"></div>
<svg class="a" style="left:868px;top:143px" width="10" height="10" viewBox="0 0 10 10"><path d="M1.6 4.6 L3.9 6.8 L8.4 2.4" fill="none" stroke="#000" stroke-width="2.3"/></svg>
<!-- status grip -->
<div class="a" style="left:975px;top:717px;width:2px;height:2px;background:#8f8d8f;box-shadow:1px 1px 0 #fff;"></div>
<div class="a" style="left:971px;top:721px;width:2px;height:2px;background:#8f8d8f;box-shadow:1px 1px 0 #fff;"></div><div class="a" style="left:975px;top:721px;width:2px;height:2px;background:#8f8d8f;box-shadow:1px 1px 0 #fff;"></div>
<div class="a" style="left:967px;top:725px;width:2px;height:2px;background:#8f8d8f;box-shadow:1px 1px 0 #fff;"></div><div class="a" style="left:971px;top:725px;width:2px;height:2px;background:#8f8d8f;box-shadow:1px 1px 0 #fff;"></div><div class="a" style="left:975px;top:725px;width:2px;height:2px;background:#8f8d8f;box-shadow:1px 1px 0 #fff;"></div>
</body>
</html>
